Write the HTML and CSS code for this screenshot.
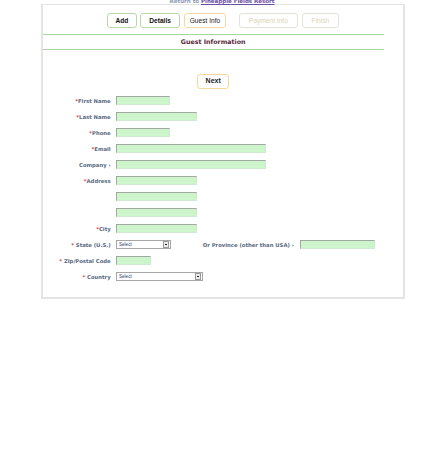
FILE: index.html
```html
<!DOCTYPE html>
<html>
<head>
<meta charset="utf-8">
<title>Guest Information</title>
<link rel="stylesheet" href="styles.css">
</head>
<body>
<div class="top"><span class="ret">Return to</span> <a class="resort" href="#">Pineapple Fields Resort</a></div>
<div class="panel">
  <div class="steps">
    <span class="step done s-add">Add</span>
    <span class="step done s-details">Details</span>
    <span class="step current s-guest">Guest Info</span>
    <span class="step off s-pay">Payment Info</span>
    <span class="step off s-finish">Finish</span>
  </div>
  <div class="inner">
    <div class="title">Guest Information</div>
    <div class="next-wrap"><span class="btn-next">Next</span></div>
    <div class="form">
      <div class="lbl"><span class="req">*</span>First Name</div>
      <div class="fld"><input class="inp w54" type="text"></div>

      <div class="lbl"><span class="req">*</span>Last Name</div>
      <div class="fld"><input class="inp w81" type="text"></div>

      <div class="lbl"><span class="req">*</span>Phone</div>
      <div class="fld"><input class="inp w54" type="text"></div>

      <div class="lbl"><span class="req">*</span>Email</div>
      <div class="fld"><input class="inp w150" type="text"></div>

      <div class="lbl">Company <span class="arr">›</span></div>
      <div class="fld"><input class="inp w150" type="text"></div>

      <div class="lbl"><span class="req">*</span>Address</div>
      <div class="fld"><input class="inp w81" type="text"></div>

      <div class="lbl"></div>
      <div class="fld"><input class="inp w81" type="text"></div>

      <div class="lbl"></div>
      <div class="fld"><input class="inp w81" type="text"></div>

      <div class="lbl"><span class="req">*</span>City</div>
      <div class="fld"><input class="inp w81" type="text"></div>

      <div class="lbl"><span class="req">*</span> State (U.S.)</div>
      <div class="fld">
        <div class="sel w55"><span class="sel-text">Select</span><span class="sel-btn"><span class="sel-tri"></span></span></div>
        <span class="prov-lbl">Or Province (other than USA) <span class="arr">›</span></span>
        <input class="inp w76" type="text">
      </div>

      <div class="lbl"><span class="req">*</span> Zip/Postal Code</div>
      <div class="fld"><input class="inp w35" type="text"></div>

      <div class="lbl"><span class="req">*</span> Country</div>
      <div class="fld">
        <div class="sel w87"><span class="sel-text">Select</span><span class="sel-btn"><span class="sel-tri"></span></span></div>
      </div>
    </div>
  </div>
</div>
</body>
</html>
```

FILE: styles.css
```css
html, body {
  margin: 0;
  padding: 0;
  background: #ffffff;
}

body {
  width: 438px;
  height: 450px;
  font-family: "DejaVu Sans", Verdana, sans-serif;
}

.top {
  height: 4px;
  line-height: 3.5px;
  font-size: 5.5px;
  font-weight: bold;
  text-align: center;
  padding-left: 6px;
  overflow: visible;
}

.ret {
  color: #8d9bb3;
}

.resort {
  color: #6b4ea6;
  text-decoration: underline;
}

.panel {
  margin-left: 40.7px;
  width: 364px;
  height: 295px;
  box-sizing: border-box;
  border: 2px solid #e4e4e4;
  border-top-width: 1.5px;
}

.steps {
  margin-top: 7.5px;
  display: flex;
  justify-content: center;
  padding-left: 0.5px;
}

.step {
  box-sizing: border-box;
  height: 15px;
  line-height: 13px;
  border: 1px solid #b9d9ab;
  border-radius: 3px;
  background: #ffffff;
  font-family: "Liberation Sans", Arial, sans-serif;
  font-size: 6.6px;
  text-align: center;
  color: #111111;
}

.done {
  font-weight: bold;
}

.current {
  border-color: #f4dba2;
  color: #222222;
}

.off {
  border-color: #e3e3dc;
  color: #d9d5b2;
}

.s-add { width: 30px; }
.s-details { width: 40px; margin-left: 3.3px; }
.s-guest { width: 41.7px; margin-left: 4px; }
.s-pay { width: 58.7px; margin-left: 13.3px; }
.s-finish { width: 37.3px; margin-left: 4px; }

.inner {
  width: 341px;
}

.title {
  margin-top: 6.7px;
  height: 15.5px;
  box-sizing: border-box;
  border-top: 1px solid #a9d5a0;
  border-bottom: 1px solid #a9d5a0;
  line-height: 13.5px;
  text-align: center;
  font-size: 6.3px;
  font-weight: bold;
  color: #56293a;
}

.next-wrap {
  margin-top: 24.6px;
  display: flex;
  justify-content: center;
}

.btn-next {
  box-sizing: border-box;
  width: 32.3px;
  height: 14.4px;
  line-height: 12.4px;
  border: 1px solid #f4d99c;
  border-radius: 3px;
  text-align: center;
  font-family: "Liberation Sans", Arial, sans-serif;
  font-weight: bold;
  font-size: 7px;
  color: #222222;
}

.form {
  margin-top: 4px;
  display: grid;
  grid-template-columns: 73.3px auto;
  grid-auto-rows: 16px;
  align-items: center;
}

.lbl {
  text-align: right;
  padding-right: 5.3px;
  font-size: 5.3px;
  font-weight: bold;
  color: #5a6a84;
  white-space: nowrap;
}

.req {
  color: #e23a3a;
}

.arr {
  color: #5a6a84;
}

.fld {
  display: flex;
  align-items: center;
}

.inp {
  box-sizing: border-box;
  height: 8.7px;
  margin: 0;
  padding: 0;
  background: #ccf5cc;
  border-style: solid;
  border-width: 1.3px 0.7px 0.7px 1.3px;
  border-color: #a2a8a2 #d4e6d4 #d4e6d4 #a2a8a2;
  outline: none;
}

.w35 { width: 35px; }
.w54 { width: 54px; }
.w76 { width: 75.7px; }
.w81 { width: 81px; }
.w150 { width: 150px; }
.w55 { width: 55px; }
.w87 { width: 87px; }

.sel {
  box-sizing: border-box;
  height: 8.7px;
  border: 0.8px solid #a6a6a6;
  background: #ffffff;
  display: flex;
  align-items: center;
  justify-content: space-between;
}

.sel-text {
  padding-left: 2px;
  font-family: "Liberation Sans", Arial, sans-serif;
  font-size: 4.6px;
  color: #2a3a7a;
}

.sel-btn {
  box-sizing: border-box;
  width: 6.8px;
  height: 6.8px;
  margin-right: 0.6px;
  border: 0.6px solid #9a9a9a;
  background: #ececec;
  display: flex;
  align-items: center;
  justify-content: center;
}

.sel-tri {
  width: 1.8px;
  height: 1.6px;
  background: #222222;
}

.prov-lbl {
  margin-left: 31.7px;
  margin-right: 5.7px;
  font-size: 5.3px;
  font-weight: bold;
  color: #5a6a84;
  white-space: nowrap;
}
```
